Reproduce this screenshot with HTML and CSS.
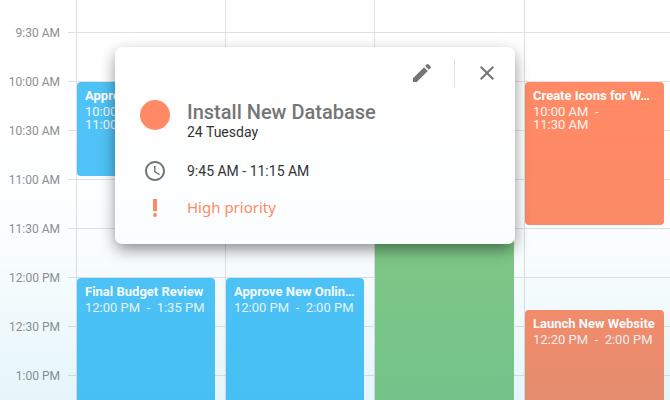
FILE: index.html
```html
<!DOCTYPE html>
<html lang="en">
<head>
<meta charset="utf-8">
<title>Schedule</title>
<link rel="stylesheet" href="styles.css">
</head>
<body>
<main class="calendar">
  <div class="times">
    <time>9:30 AM</time>
    <time>10:00 AM</time>
    <time>10:30 AM</time>
    <time>11:00 AM</time>
    <time>11:30 AM</time>
    <time>12:00 PM</time>
    <time>12:30 PM</time>
    <time>1:00 PM</time>
  </div>
  <div class="days">
    <section class="day">
      <article class="event blue span-1h">
        <h3>Approve…</h3>
        <p>10:00 AM &nbsp;-<br>11:00 AM</p>
      </article>
      <article class="event blue at-noon span-rest">
        <h3>Final Budget Review</h3>
        <p>12:00 PM &nbsp;-&nbsp; 1:35 PM</p>
      </article>
    </section>
    <section class="day">
      <article class="event blue from-noon span-rest">
        <h3>Approve New Onlin…</h3>
        <p>12:00 PM &nbsp;-&nbsp; 2:00 PM</p>
      </article>
    </section>
    <section class="day">
      <article class="event green span-rest"></article>
    </section>
    <section class="day">
      <article class="event orange span-90m">
        <h3>Create Icons for W…</h3>
        <p>10:00 AM &nbsp;-<br>11:30 AM</p>
      </article>
      <article class="event orange at-1220 span-rest">
        <h3>Launch New Website</h3>
        <p>12:20 PM &nbsp;-&nbsp; 2:00 PM</p>
      </article>
    </section>
  </div>
</main>

<div class="popup" role="dialog" aria-labelledby="popup-title">
  <div class="toolbar">
    <button type="button" aria-label="Edit">
      <svg width="24" height="24" viewBox="0 0 24 24"><path d="M3 17.25V21h3.75L17.81 9.94l-3.75-3.75L3 17.25zM20.71 7.04a1 1 0 0 0 0-1.41l-2.34-2.34a1 1 0 0 0-1.41 0l-1.83 1.83 3.75 3.75 1.83-1.83z"/></svg>
    </button>
    <span class="divider"></span>
    <button type="button" aria-label="Close">
      <svg width="24" height="24" viewBox="0 0 24 24"><path d="M19 6.41 17.59 5 12 10.59 6.41 5 5 6.41 10.59 12 5 17.59 6.41 19 12 13.41 17.59 19 19 17.59 13.41 12z"/></svg>
    </button>
  </div>
  <div class="details">
    <span class="dot"></span>
    <div>
      <h2 id="popup-title">Install New Database</h2>
      <p class="date">24 Tuesday</p>
    </div>
    <svg class="clock" width="24" height="24" viewBox="0 0 24 24"><path d="M11.99 2C6.47 2 2 6.48 2 12s4.47 10 9.99 10C17.52 22 22 17.52 22 12S17.52 2 11.99 2zM12 20c-4.42 0-8-3.58-8-8s3.58-8 8-8 8 3.58 8 8-3.58 8-8 8zm.5-13H11v6l5.25 3.15.75-1.23-4.5-2.67z"/></svg>
    <p class="hours">9:45 AM - 11:15 AM</p>
    <svg class="alert" width="6" height="18" viewBox="0 0 6 18"><path d="M1 0h4v12H1z"/><circle cx="3" cy="16" r="2"/></svg>
    <p class="priority">High priority</p>
  </div>
</div>
<div class="tint"></div>
</body>
</html>
```
FILE: styles.css
```css
* { box-sizing: border-box; }

body {
  margin: 0;
  height: 100vh;
  overflow: hidden;
  position: relative;
  background: #fff;
  font-family: Roboto, "Liberation Sans", sans-serif;
}

h2, h3, p { margin: 0; }

.calendar {
  display: grid;
  grid-template-columns: 76px 1fr;
  height: 100%;
  margin-right: -4px;
}

/* Half-hour slots are 49px tall; the first line sits 32px down. */
.times {
  padding-top: 9px;
  background: repeating-linear-gradient(#e0e0e0 0 1px, transparent 1px 49px) 68px 32px / 8px 100% no-repeat;
}

.times time {
  display: block;
  height: 49px;
  padding-right: 16px;
  line-height: 49px;
  font-size: 12px;
  text-align: right;
  color: #8e8e8e;
}

.days {
  display: grid;
  grid-template-columns: 149fr 149fr 150fr 150fr;
  min-width: 0;
  background: repeating-linear-gradient(#e0e0e0 0 1px, transparent 1px 49px) 0 32px / 100% 100% no-repeat;
}

.day {
  display: flex;
  flex-direction: column;
  min-width: 0;
  height: 100vh;
  padding: 82px 10px 0 0;
  border-left: 1px solid #e0e0e0;
}

.event {
  flex-shrink: 0;
  padding: 6px 8px;
  border-radius: 4px;
  color: #fff;
  font-size: 13px;
}

.event h3 {
  font-size: 13px;
  font-weight: 700;
  line-height: 16px;
  white-space: nowrap;
}

.event p {
  padding-top: 1px;
  line-height: 13px;
  white-space: nowrap;
  opacity: 0.9;
}

.blue { background: #4fc3f7; }
.green { background: #81c784; }
.orange { background: #ff8a65; }

.span-1h { height: 94px; }
.span-90m { height: 143px; }
.span-rest { flex: 1 0 0; border-radius: 4px 4px 0 0; }
.at-noon { margin-top: 102px; }
.from-noon { margin-top: 196px; }
.at-1220 { margin-top: 85px; }

.popup {
  position: absolute;
  top: 47px;
  left: 115px;
  width: 400px;
  padding: 8px 10px 20px 24px;
  border-radius: 7px;
  background: #fff;
  box-shadow: 0 6px 16px -1px rgba(0, 0, 0, 0.48);
}

.toolbar {
  display: flex;
  align-items: center;
  justify-content: flex-end;
  gap: 14px;
}

.toolbar button {
  display: grid;
  place-items: center;
  width: 36px;
  height: 36px;
  padding: 0;
  border: 0;
  background: none;
}

.toolbar svg, .clock { fill: #757575; }

.divider {
  width: 1px;
  height: 28px;
  background: #e0e0e0;
}

.details {
  display: grid;
  grid-template-columns: 32px 1fr;
  column-gap: 16px;
  align-items: center;
  justify-items: start;
  padding-top: 9px;
}

.dot {
  width: 30px;
  height: 30px;
  margin: 0 1px 10px;
  border-radius: 50%;
  background: #ff8a65;
}

.details h2 {
  font-size: 20px;
  font-weight: 500;
  line-height: 24px;
  color: #757575;
}

.date, .hours {
  font-size: 14px;
  color: #333;
}

.date { line-height: 16px; }
.hours { line-height: 40px; }

.clock, .alert { justify-self: center; }
.hours, .clock { margin-top: 11px; }
.alert { fill: #ff8a65; }

.priority {
  font-family: "Noto Sans", sans-serif;
  font-size: 15px;
  line-height: 33px;
  color: #ff8a65;
}

/* Cool wash over the lower part of the view. */
.tint {
  position: absolute;
  inset: 0;
  pointer-events: none;
  background: linear-gradient(transparent 30%, rgba(0, 165, 225, 0.02) 60%, rgba(0, 160, 200, 0.1));
}
```
